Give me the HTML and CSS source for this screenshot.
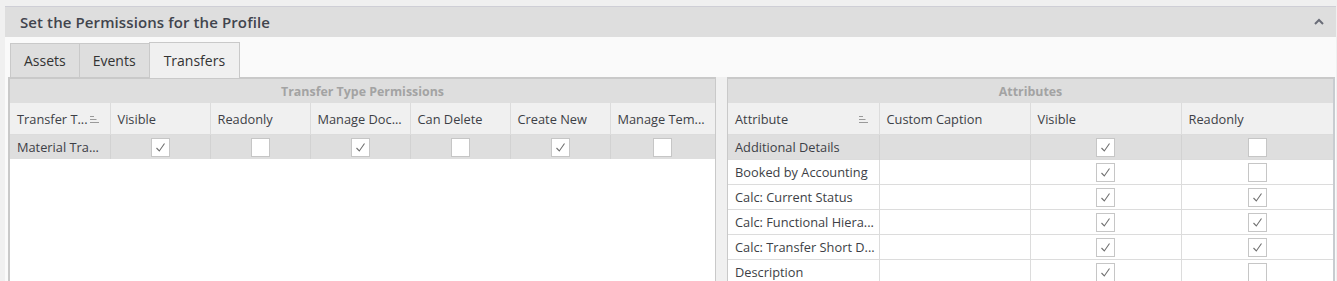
FILE: index.html
```html
<!DOCTYPE html>
<html>
<head>
<meta charset="utf-8">
<link rel="stylesheet" href="styles.css">
</head>
<body>
<div class="panel">
  <div class="panel-header">
    <span class="panel-title">Set the Permissions for the Profile</span>
    <svg class="caret" width="10" height="7" viewBox="0 0 10 7"><path d="M1 6 L5 2 L9 6" fill="none" stroke="#6a6d78" stroke-width="2"/></svg>
  </div>
  <div class="panel-body">
    <div class="tabs">
      <div class="tab">Assets</div>
      <div class="tab">Events</div>
      <div class="tab active">Transfers</div>
    </div>
    <div class="content">
      <div class="grid grid-left">
        <div class="group-head">Transfer Type Permissions</div>
        <table class="tbl left-tbl">
          <colgroup>
            <col style="width:100px"><col style="width:100px"><col style="width:100px"><col style="width:100px"><col style="width:100px"><col style="width:100px"><col>
          </colgroup>
          <thead>
            <tr>
              <th><span class="th-inner">Transfer T...<svg class="sort" width="9" height="8" viewBox="0 0 9 8"><path d="M0 1.5H4M0 4.5H6.5M0 7.5H9" stroke="#9a9a9a" stroke-width="1"/></svg></span></th>
              <th>Visible</th>
              <th>Readonly</th>
              <th>Manage Doc...</th>
              <th>Can Delete</th>
              <th>Create New</th>
              <th>Manage Tem...</th>
            </tr>
          </thead>
          <tbody>
            <tr class="sel">
              <td>Material Tra...</td>
              <td class="c"><span class="cb on"></span></td>
              <td class="c"><span class="cb"></span></td>
              <td class="c"><span class="cb on"></span></td>
              <td class="c"><span class="cb"></span></td>
              <td class="c"><span class="cb on"></span></td>
              <td class="c"><span class="cb"></span></td>
            </tr>
          </tbody>
        </table>
      </div>
      <div class="splitter"></div>
      <div class="grid grid-right">
        <div class="group-head">Attributes</div>
        <table class="tbl right-tbl">
          <colgroup>
            <col style="width:151px"><col style="width:151px"><col style="width:151px"><col>
          </colgroup>
          <thead>
            <tr>
              <th><span class="th-inner">Attribute<svg class="sort" width="9" height="8" viewBox="0 0 9 8"><path d="M0 1.5H4M0 4.5H6.5M0 7.5H9" stroke="#9a9a9a" stroke-width="1"/></svg></span></th>
              <th>Custom Caption</th>
              <th>Visible</th>
              <th>Readonly</th>
            </tr>
          </thead>
          <tbody>
            <tr class="sel"><td>Additional Details</td><td></td><td class="c"><span class="cb on"></span></td><td class="c"><span class="cb"></span></td></tr>
            <tr><td>Booked by Accounting</td><td></td><td class="c"><span class="cb on"></span></td><td class="c"><span class="cb"></span></td></tr>
            <tr><td>Calc: Current Status</td><td></td><td class="c"><span class="cb on"></span></td><td class="c"><span class="cb on"></span></td></tr>
            <tr><td>Calc: Functional Hiera...</td><td></td><td class="c"><span class="cb on"></span></td><td class="c"><span class="cb on"></span></td></tr>
            <tr><td>Calc: Transfer Short D...</td><td></td><td class="c"><span class="cb on"></span></td><td class="c"><span class="cb on"></span></td></tr>
            <tr><td>Description</td><td></td><td class="c"><span class="cb on"></span></td><td class="c"><span class="cb"></span></td></tr>
          </tbody>
        </table>
      </div>
    </div>
  </div>
</div>
</body>
</html>
```

FILE: styles.css
```css
html, body {
  margin: 0;
  padding: 0;
  background: #f0f0f0;
  font-family: "Open Sans", "Noto Sans", sans-serif;
  color: #3d3f46;
  overflow: hidden;
}

.panel {
  margin: 6px 1px 0 5px;
  border-top: 1px solid #cfcfd6;
}

.panel-header {
  height: 30px;
  background: #dedede;
  display: flex;
  align-items: center;
  justify-content: space-between;
  padding: 0 12px 0 15px;
}

.panel-title {
  font-size: 15px;
  font-weight: 600;
  color: #41444d;
  letter-spacing: 0.1px;
}

.caret {
  display: block;
  margin-top: -1px;
}

.panel-body {
  background: #fafafa;
  padding: 5px 0 0 3px;
  height: 260px;
}

.tabs {
  display: flex;
  padding-left: 2px;
  align-items: flex-end;
  height: 35px;
  position: relative;
  z-index: 1;
}

.tab {
  height: 34px;
  box-sizing: border-box;
  border: 1px solid #c9c9c9;
  border-bottom: none;
  background: #dedede;
  font-size: 14px;
  color: #333;
  display: flex;
  align-items: center;
  padding: 0 13px 0 13px;
  margin-right: -1px;
}

.tab.active {
  height: 36px;
  background: #f0f0f0;
  padding: 0 14px;
  margin-bottom: -1px;
}

.content {
  display: flex;
  height: 230px;
}

.grid {
  border-top: 2px solid #c9c9c9;
  background: #fff;
  height: 100%;
}

.grid-left {
  width: 705px;
  border-left: 2px solid #c9c9c9;
}

.grid-right {
  width: 605px;
  border-right: 2px solid #c8ccd0;
}

.splitter {
  width: 11px;
  background: #f0f0f0;
  border-left: 1px solid #c9c9c9;
  border-right: 1px solid #c9c9c9;
}

.group-head {
  height: 24px;
  background: #dedede;
  color: #a3a3a3;
  font-weight: 700;
  font-size: 12.4px;
  display: flex;
  align-items: center;
  justify-content: center;
}

.tbl {
  border-collapse: collapse;
  table-layout: fixed;
  width: 100%;
  font-size: 12.8px;
}

.tbl th {
  height: 31px;
  padding: 2px 7px 0;
  background: #f0f0f0;
  font-weight: 400;
  text-align: left;
  border-left: 1px solid #dcdcdc;
  white-space: nowrap;
  overflow: hidden;
  color: #3d3f46;
  box-sizing: border-box;
}

.tbl th:first-child,
.tbl td:first-child {
  border-left: none;
}

.th-inner {
  display: flex;
  align-items: center;
  justify-content: space-between;
}

.sort {
  display: block;
  margin-right: 4px;
}

.tbl td {
  height: 25px;
  box-sizing: border-box;
  padding: 1px 7px 0;
  border-left: 1px solid #dcdcdc;
  border-top: 1px solid #dcdcdc;
  white-space: nowrap;
  overflow: hidden;
  color: #3d3f46;
}

.tbl tr.sel td {
  background: #dedede;
  border-left-color: #d2d2d2;
}

.tbl td.c {
  text-align: center;
  padding: 0;
}

.cb {
  display: inline-block;
  width: 17px;
  height: 17px;
  background: #fff;
  border: 1px solid #c6c6c6;
  vertical-align: middle;
}

.cb.on {
  background-image: url("data:image/svg+xml;utf8,<svg xmlns='http://www.w3.org/2000/svg' width='17' height='17' viewBox='0 0 17 17'><path d='M4.5 9 L7.3 12 L12.5 4.5' fill='none' stroke='%23707070' stroke-width='1.1'/></svg>");
  background-repeat: no-repeat;
}
```
